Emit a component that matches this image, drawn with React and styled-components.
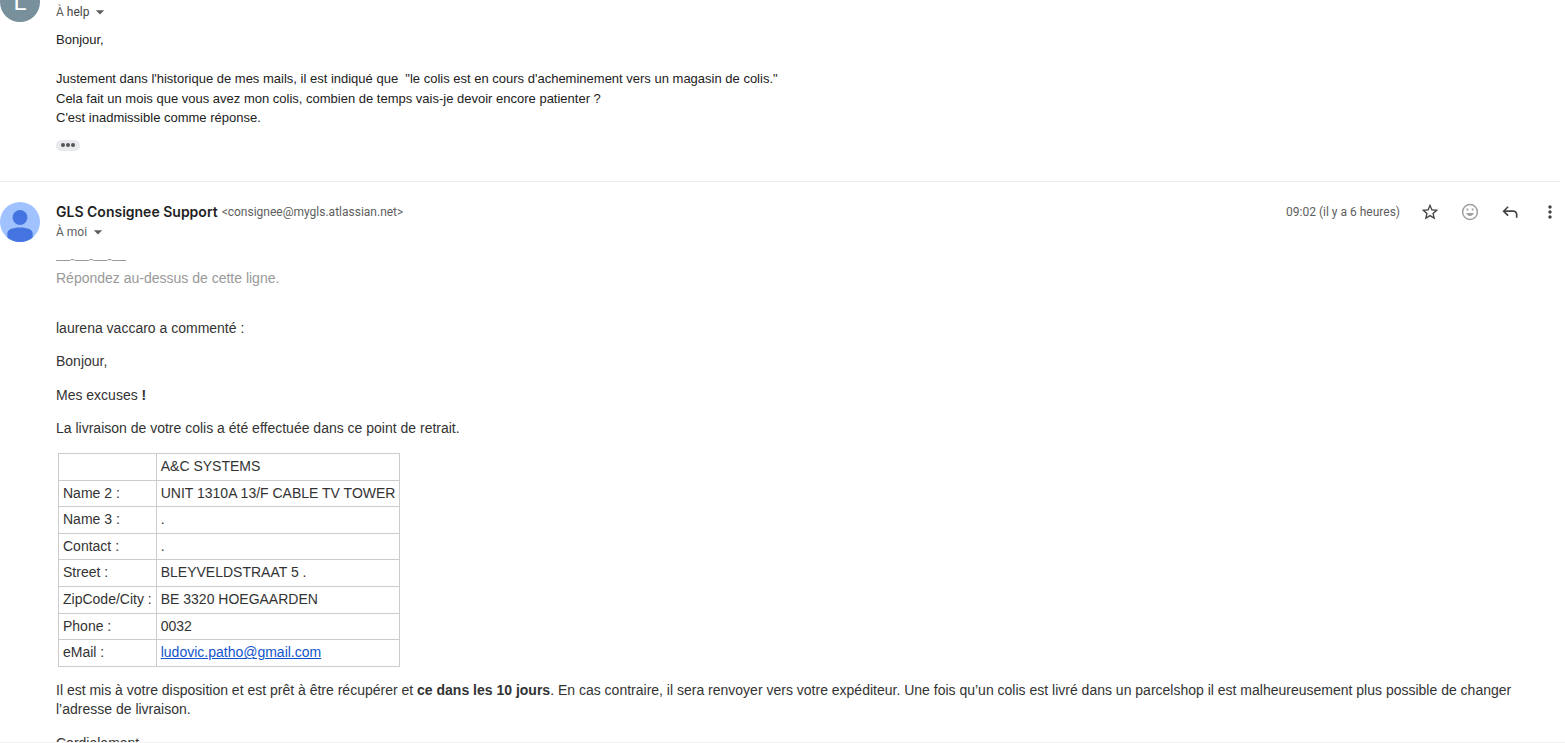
import React from "react";
import styled, { createGlobalStyle } from "styled-components";
import { MdStarBorder, MdMoreVert, MdArrowDropDown } from "react-icons/md";

const GlobalStyle = createGlobalStyle`
  * { box-sizing: border-box; }
  body {
    margin: 0;
    background: #fff;
    color: #333;
    font-family: "Liberation Sans", Arial, sans-serif;
    overflow: hidden;
  }
`;

const Viewport = styled.main`
  height: 100vh;
  overflow: hidden;
  padding-right: 5px;
  border-bottom: 1px solid #f2f2f2;
`;

/* The conversation is scrolled past the first sender's name. */
const Thread = styled.div`
  margin-top: -18px;
`;

const Message = styled.article`
  display: grid;
  grid-template-columns: 40px minmax(0, 1fr);
  column-gap: 16px;
  padding-bottom: 30px;

  & + & {
    border-top: 1px solid #e9ebee;
    padding-top: 20px;
  }
`;

const Initial = styled.div`
  display: flex;
  align-items: center;
  justify-content: center;
  width: 40px;
  height: 40px;
  border-radius: 50%;
  background: #78909c;
  color: #fff;
  font: 400 24px/44px Roboto, sans-serif;
`;

const Header = styled.header`
  display: flex;
  justify-content: space-between;
  height: 40px;
  color: #5e5e5e;
  font: 400 12px/20px Roboto, sans-serif;
`;

const Sender = styled.div`
  display: flex;
  align-items: center;
  gap: 4px;
  height: 20px;
`;

const Name = styled.h3`
  margin: 0;
  color: #1f1f1f;
  font-family: Inter, sans-serif;
  font-size: 14px;
  font-weight: 600;
  line-height: 20px;
`;

const Recipient = styled.button`
  display: flex;
  align-items: center;
  gap: 1px;
  height: 20px;
  padding: 0;
  border: 0;
  background: none;
  color: inherit;
  font: inherit;

  b {
    color: #444;
    font-weight: 400;
  }
`;

const Actions = styled.div`
  display: flex;
  align-items: center;
  gap: 20px;
  height: 20px;
`;

const IconButton = styled.button`
  display: flex;
  width: 20px;
  height: 20px;
  padding: 0;
  border: 0;
  background: none;
  color: ${(p) => (p.$muted ? "#a0a0a0" : "#444")};
`;

const Reply = styled.div`
  padding-top: 8px;
  color: #222;
  font-size: 13px;
  line-height: 1.5;
  white-space: pre-wrap;
`;

const Trimmed = styled.button`
  display: flex;
  align-items: center;
  justify-content: center;
  gap: 1px;
  width: 24px;
  height: 11px;
  margin-top: 12px;
  padding: 0;
  border: 0;
  border-radius: 6px;
  background: #e8eaed;
`;

const Dot = styled.span`
  width: 4px;
  height: 4px;
  border-radius: 50%;
  background: #555;
`;

const Body = styled.div`
  padding-top: 8px;
  font-size: 14px;
  line-height: 1.4;

  p { margin: 0 0 14px; }
`;

const ReplyMarker = styled.div`
  margin-bottom: 30px;
  color: #999;
`;

const Address = styled.table`
  margin: 0 2px 14px;
  border-collapse: collapse;

  th, td {
    padding: 3px 4px;
    border: 1px solid #ccc;
    font-weight: 400;
    text-align: left;
    vertical-align: top;
  }
`;

const MailLink = styled.a`
  color: #15c;
`;

const rows = [
  ["", "A&C SYSTEMS"],
  ["Name 2 :", "UNIT 1310A 13/F CABLE TV TOWER"],
  ["Name 3 :", "."],
  ["Contact :", "."],
  ["Street :", "BLEYVELDSTRAAT 5 ."],
  ["ZipCode/City :", "BE 3320 HOEGAARDEN"],
  ["Phone :", "0032"],
  ["eMail :", <MailLink href="mailto:ludovic.patho@gmail.com">ludovic.patho@gmail.com</MailLink>],
];

function PersonAvatar() {
  return (
    <svg width="40" height="40" viewBox="0 0 40 40" aria-hidden="true">
      <defs>
        <clipPath id="avatar"><circle cx="20" cy="20" r="20" /></clipPath>
      </defs>
      <g clipPath="url(#avatar)">
        <rect width="40" height="40" fill="#a0c3ff" />
        <circle cx="20" cy="15.5" r="7.4" fill="#4374e0" />
        <path d="M7.3 40V31.5C7.3 27.5 12 25.4 20 25.4S32.7 27.5 32.7 31.5V40Z" fill="#4374e0" />
      </g>
    </svg>
  );
}

function SmileIcon() {
  return (
    <svg width="20" height="20" viewBox="0 0 20 20" aria-hidden="true">
      <circle cx="10" cy="10" r="7.4" fill="none" stroke="currentColor" strokeWidth="1.5" />
      <path d="M6.5 6.4h1.8v2.2H6.5zM11.7 6.4h1.8v2.2h-1.8zM6.2 11h7.600c-.7 1.900-2 3-3.800 3S6.900 12.900 6.200 11Z" fill="currentColor" />
    </svg>
  );
}

function ReplyIcon() {
  return (
    <svg width="20" height="20" viewBox="0 -960 960 960" fill="currentColor" aria-hidden="true">
      <path d="M760-200v-160q0-50-35-85t-85-35H273l144 144-57 56-240-240 240-240 57 56-144 144h367q83 0 141.500 58.500T840-360v160h-80Z" />
    </svg>
  );
}

export default function App() {
  return (
    <Viewport>
      <GlobalStyle />
      <Thread>
        <Message>
          <Initial>L</Initial>
          <div>
            <Header>
              <div>
                <Sender />
                <Recipient>
                  <span>À <b>help</b></span>
                  <MdArrowDropDown size={20} />
                </Recipient>
              </div>
            </Header>
            <Reply>
              <div>Bonjour,</div>
              <br />
              <div>{"Justement dans l'historique de mes mails, il est indiqué que  \"le colis est en cours d'acheminement vers un magasin de colis.\""}</div>
              <div>Cela fait un mois que vous avez mon colis, combien de temps vais-je devoir encore patienter ?</div>
              <div>C'est inadmissible comme réponse.</div>
            </Reply>
            <Trimmed aria-label="Afficher le contenu abrégé"><Dot /><Dot /><Dot /></Trimmed>
          </div>
        </Message>

        <Message>
          <PersonAvatar />
          <div>
            <Header>
              <div>
                <Sender>
                  <Name>GLS Consignee Support</Name>
                  <span>&lt;consignee@mygls.atlassian.net&gt;</span>
                </Sender>
                <Recipient>
                  <span>À moi</span>
                  <MdArrowDropDown size={20} />
                </Recipient>
              </div>
              <Actions>
                <time>09:02 (il y a 6 heures)</time>
                <IconButton aria-label="Suivre"><MdStarBorder size={20} /></IconButton>
                <IconButton aria-label="Réagir" $muted><SmileIcon /></IconButton>
                <IconButton aria-label="Répondre"><ReplyIcon /></IconButton>
                <IconButton aria-label="Plus"><MdMoreVert size={20} /></IconButton>
              </Actions>
            </Header>
            <Body>
              <ReplyMarker>—-—-—-—<br />Répondez au-dessus de cette ligne.</ReplyMarker>
              <p>laurena vaccaro a commenté :</p>
              <p>Bonjour,</p>
              <p>Mes excuses <b>!</b></p>
              <p>La livraison de votre colis a été effectuée dans ce point de retrait.</p>
              <Address>
                <tbody>
                  {rows.map(([label, value], i) => (
                    <tr key={i}>
                      <th scope="row">{label}</th>
                      <td>{value}</td>
                    </tr>
                  ))}
                </tbody>
              </Address>
              <p>
                Il est mis à votre disposition et est prêt à être récupérer et <b>ce dans les 10 jours</b>. En cas
                contraire, il sera renvoyer vers votre expéditeur. Une fois qu’un colis est livré dans un parcelshop il
                est malheureusement plus possible de changer l’adresse de livraison.
              </p>
              <p>Cordialement,</p>
            </Body>
          </div>
        </Message>
      </Thread>
    </Viewport>
  );
}
